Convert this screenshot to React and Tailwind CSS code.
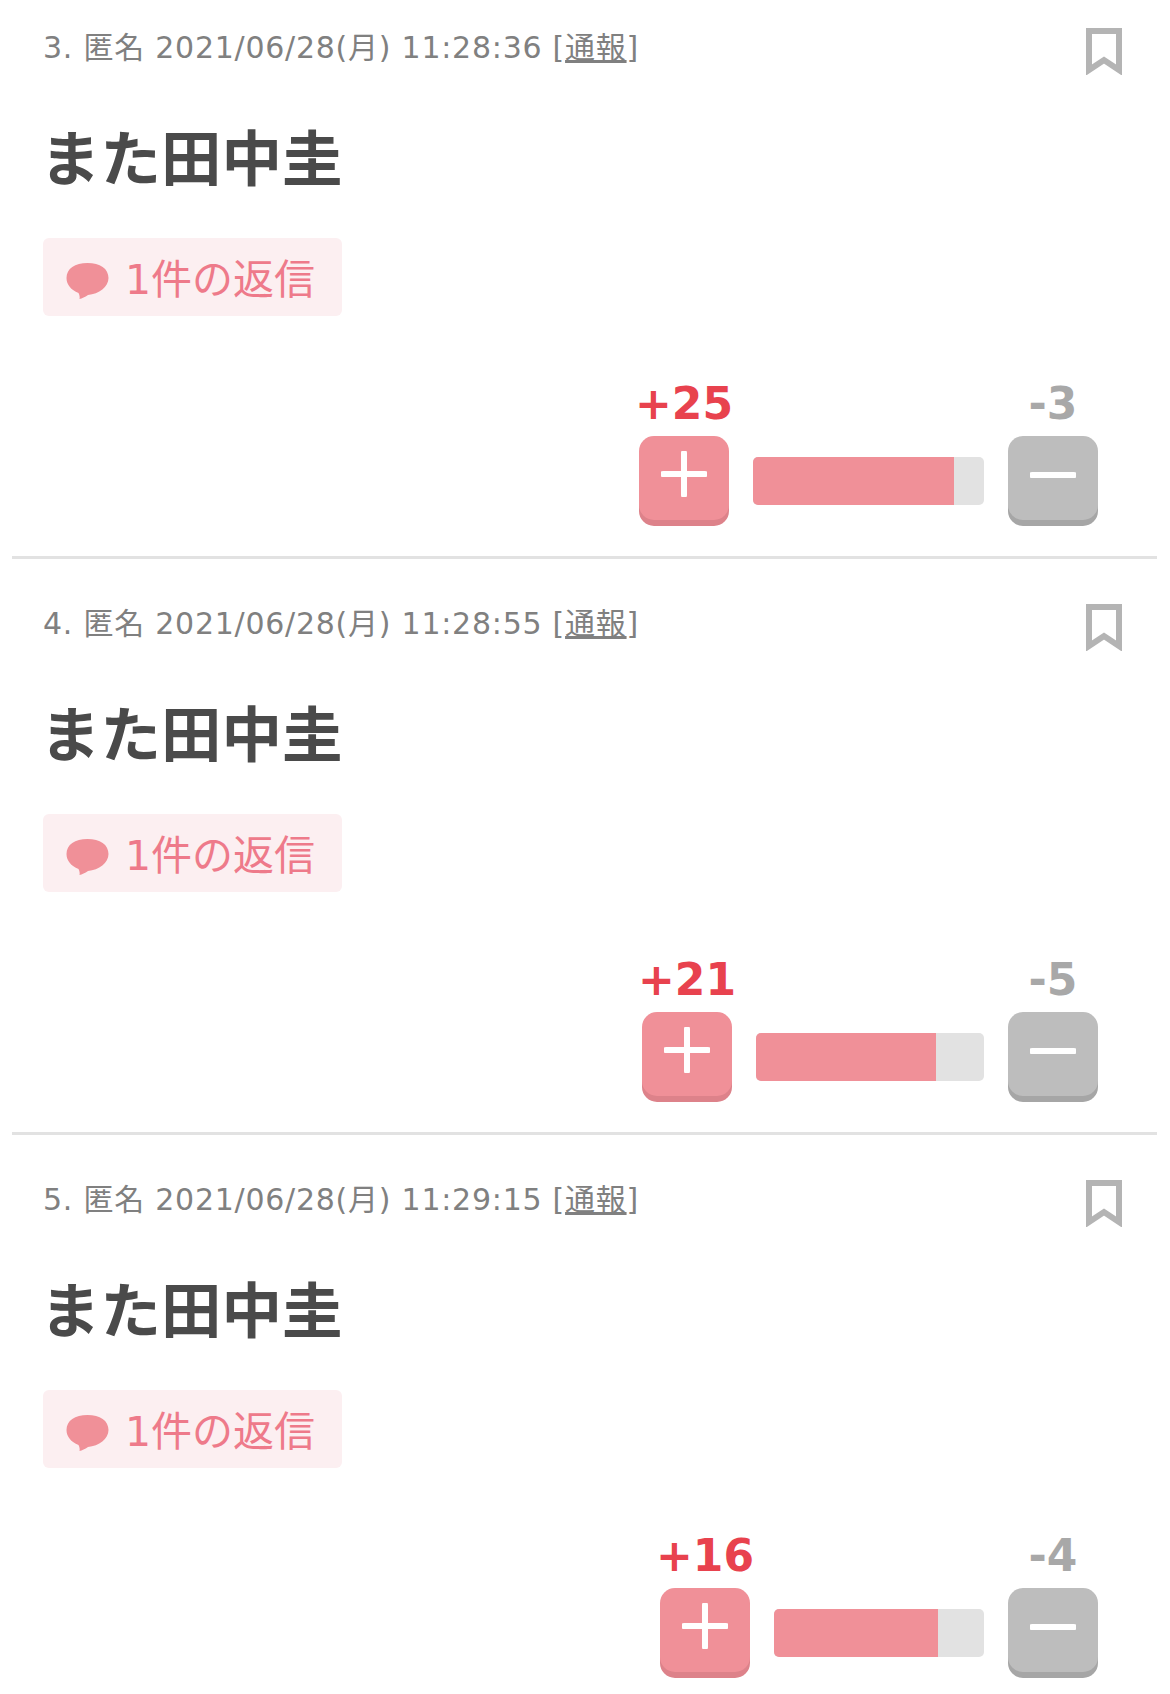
const posts = [
  { n: 3, time: "11:28:36", up: 25, down: 3, bar: 231, pct: 87 },
  { n: 4, time: "11:28:55", up: 21, down: 5, bar: 228, pct: 79 },
  { n: 5, time: "11:29:15", up: 16, down: 4, bar: 210, pct: 78 },
];

function Bookmark() {
  return (
    <svg width="36" height="47" viewBox="0 0 36 47" className="block">
      <path d="M3 3H33V42L18 32L3 42Z" fill="none" stroke="#b4b4b4" strokeWidth="6" />
    </svg>
  );
}

function Bubble() {
  return (
    <svg width="43" height="36" viewBox="0 0 43 36" className="block">
      <path
        d="M21.5 0C34 0 42.5 5.5 42.5 15C42.5 24 33 31 22 32C19 34 16 35.5 13.5 36C14 34 13.5 32 12.5 30C5 27 0.5 21.5 0.5 15C0.5 5.5 9 0 21.5 0Z"
        fill="#f09098"
      />
    </svg>
  );
}

function Post({ p }) {
  return (
    <div className="relative h-[576px] px-[43px] pt-[28px]">
      <div className="flex items-start justify-between">
        <div className="text-[30px] leading-[40px] tracking-[0.75px] text-[#808080] whitespace-nowrap">
          {p.n}. 匿名 2021/06/28(月) {p.time} [<span className="underline">通報</span>]
        </div>
        <div className="mr-[5px]">
          <Bookmark />
        </div>
      </div>
      <div className="-ml-[3px] mt-[45px] text-[60.5px] leading-[80px] font-bold text-[#4a4a4a]">また田中圭</div>
      <div className="mt-[38px] flex h-[78px] w-[299px] items-center gap-[16px] rounded-[6px] bg-[#fceff1] pl-[23px] pt-[7px]">
        <Bubble />
        <span className="-mt-[1px] text-[41px] leading-[48px] text-[#ee7a8a]">1件の返信</span>
      </div>
      <div className="mt-[66px] flex items-end justify-end pr-[29px]">
        <div className="mr-[20px] flex flex-col items-center">
          <span className="text-[44px] leading-[44px] font-bold text-[#e8424e]">+{p.up}</span>
          <div className="mt-[10px] flex h-[84px] w-[90px] items-start justify-center rounded-[15px] bg-[#f09098] pt-[15px] shadow-[0_6px_0_#dd828a]">
            <svg width="46" height="46" viewBox="0 0 46 46"><path d="M23 2V44M2 23H44" stroke="#fff" strokeWidth="6" strokeLinecap="round" /></svg>
          </div>
          <div className="h-[6px]" />
        </div>
        <div className="mb-[21px] mr-[24px] h-[48px] overflow-hidden rounded-[5px] bg-[#e2e2e2]" style={{ width: p.bar }}>
          <div className="h-full bg-[#f09098]" style={{ width: `${p.pct}%` }} />
        </div>
        <div className="flex flex-col items-center">
          <span className="text-[44px] leading-[44px] font-bold text-[#a8a8a8]">-{p.down}</span>
          <div className="mt-[10px] flex h-[84px] w-[90px] items-start justify-center rounded-[15px] bg-[#bdbdbd] pt-[16px] shadow-[0_6px_0_#a6a6a6]">
            <svg width="46" height="46" viewBox="0 0 46 46"><path d="M2 23H44" stroke="#fff" strokeWidth="6" strokeLinecap="round" /></svg>
          </div>
          <div className="h-[6px]" />
        </div>
      </div>
      <div className="absolute bottom-[17px] left-[12px] right-[13px] h-[3px] bg-[#e2e2e2]" />
    </div>
  );
}

export default function App() {
  return (
    <div className="h-[1694px] w-[1170px] overflow-hidden bg-white" style={{ fontFamily: '"DejaVu Sans","Noto Sans CJK JP",sans-serif' }}>
      {posts.map((p) => <Post key={p.n} p={p} />)}
    </div>
  );
}
